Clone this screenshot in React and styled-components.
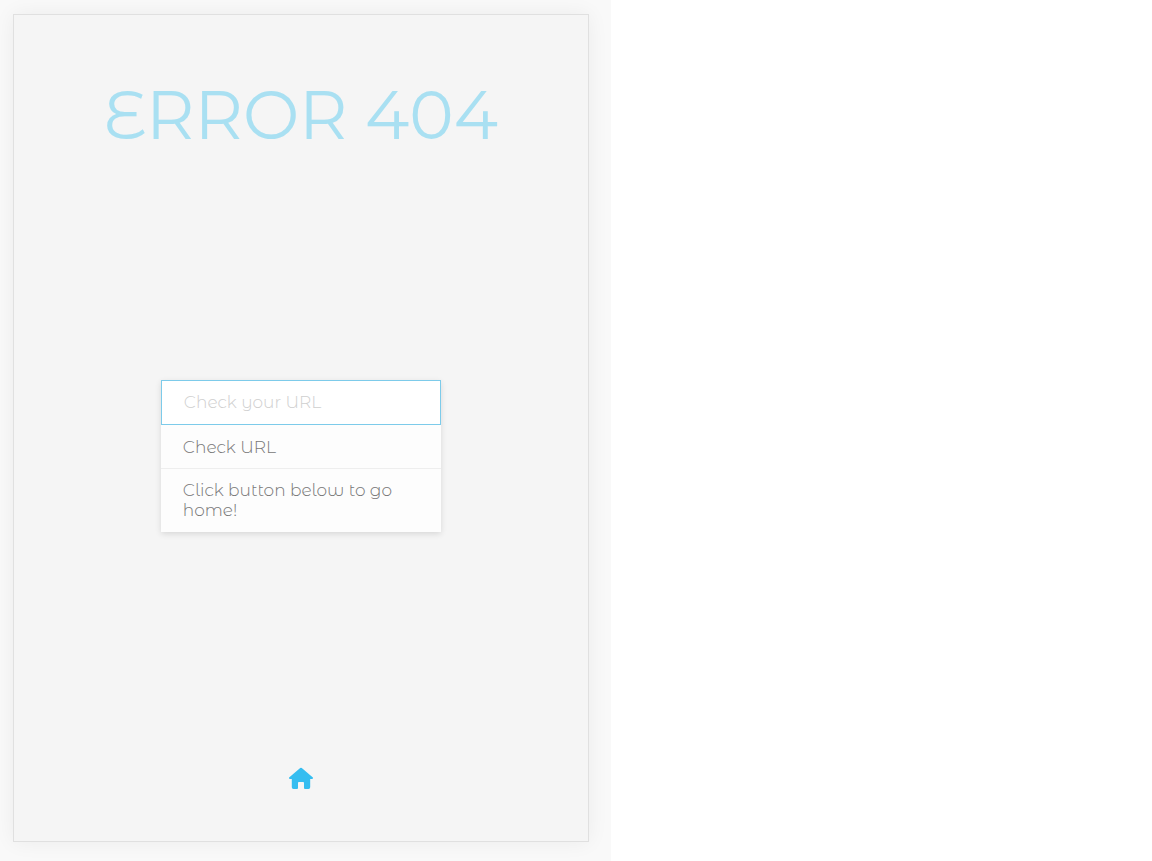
import React from "react";
import styled, { createGlobalStyle } from "styled-components";

const GlobalStyle = createGlobalStyle`
  *, *::before, *::after { box-sizing: border-box; }
  body {
    margin: 0;
    background: #fff;
    font-family: "Montserrat Alternates", Montserrat, Inter, "Liberation Sans", sans-serif;
  }
`;

const Page = styled.div`
  display: flex;
  width: 53%;
  min-height: 100vh;
  padding: 14px 22px 19px 13px;
  background: #f9f9f9;
`;

const Card = styled.main`
  flex: 1;
  display: flex;
  flex-direction: column;
  align-items: center;
  justify-content: space-between;
  padding: 62px 20px 43px;
  background: #f5f5f5;
  border: 1px solid #e0e0e0;
  box-shadow: 0 0 20px rgba(0, 0, 0, 0.06);
`;

const Title = styled.h1`
  margin: 0;
  color: #a9e0f2;
  font-size: 67px;
  line-height: 76px;
  font-weight: 400;
  white-space: nowrap;
`;

const Menu = styled.section`
  width: 280px;
  background: #fdfdfd;
  box-shadow: 0 2px 6px rgba(0, 0, 0, 0.12);
`;

const UrlInput = styled.input`
  display: block;
  width: 100%;
  height: 45px;
  padding: 0 22px;
  border: 1px solid #7dcbea;
  border-radius: 0;
  outline: none;
  background: #fff;
  color: #777;
  font: 300 17px/20px "Montserrat Alternates", Montserrat, Inter, "Liberation Sans", sans-serif;

  &::placeholder {
    color: #cfcfcf;
    opacity: 1;
  }
`;

const Options = styled.ul`
  margin: 0;
  padding: 0;
  list-style: none;
  border: solid #fdfdfd;
  border-width: 1px 0;
`;

const Option = styled.li`
  padding: 11px 22px;
  color: #777;
  font-size: 17px;
  line-height: 20px;
  font-weight: 300;

  & + & {
    border-top: 1px solid #eee;
  }
`;

const HomeLink = styled.a`
  display: block;
  padding: 8px;
  color: #35bdf0;

  svg {
    display: block;
  }
`;

export default function App() {
  return (
    <>
      <GlobalStyle />
      <Page>
        <Card>
          <Title>ERROR 404</Title>
          <Menu>
            <UrlInput type="text" placeholder="Check your URL" aria-label="Check your URL" />
            <Options>
              <Option>Check URL</Option>
              <Option>Click button below to go home!</Option>
            </Options>
          </Menu>
          <HomeLink href="#home" aria-label="Home">
            <svg width="24" height="24" viewBox="0 0 24 24" fill="currentColor" aria-hidden="true">
              <path d="M11.2 2a1.3 1.3 0 0 1 1.6 0L23.6 11.2c.8.7.4 1.7-.6 1.7H21.2v8.3a1.7 1.7 0 0 1-1.7 1.7h-3.5a1 1 0 0 1-1-1v-5a.8.8 0 0 0-.8-.8h-4.4a.8.8 0 0 0-.8.8v5a1 1 0 0 1-1 1H4.5a1.7 1.7 0 0 1-1.7-1.7V12.9H1c-1 0-1.4-1-.6-1.7z" />
            </svg>
          </HomeLink>
        </Card>
      </Page>
    </>
  );
}
